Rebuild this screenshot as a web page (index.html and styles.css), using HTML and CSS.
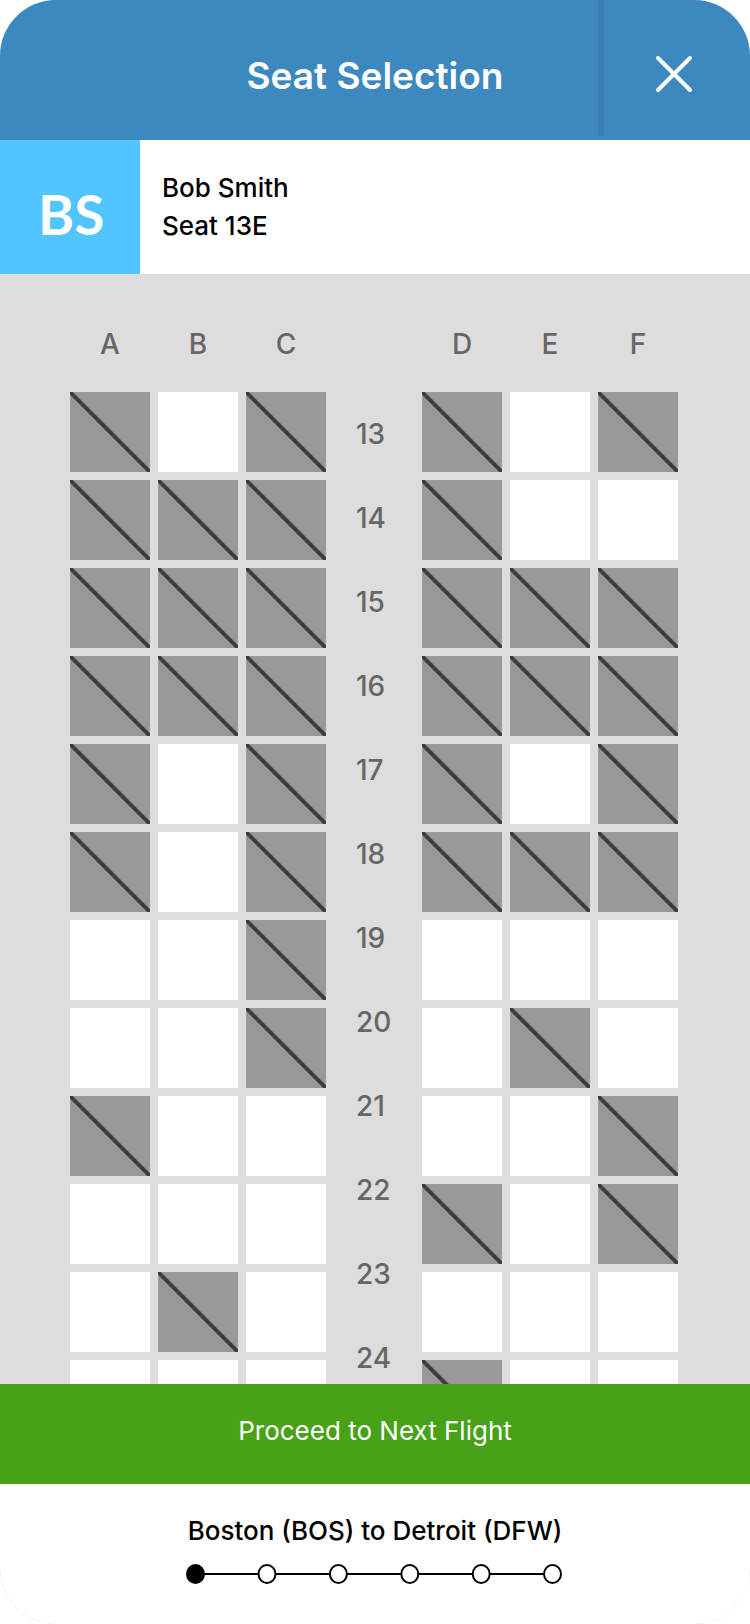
FILE: index.html
```html
<!DOCTYPE html>
<html lang="en">
<head>
<meta charset="utf-8">
<meta name="viewport" content="width=device-width, initial-scale=1">
<title>Seat Selection</title>
<link rel="stylesheet" href="styles.css">
</head>
<body>
<div class="screen">
  <header class="topbar">
    <h1 class="topbar-title">Seat Selection</h1>
    <button class="close" type="button" aria-label="Close">
      <svg width="38" height="38" viewBox="0 0 38 38" fill="none" stroke="currentColor" stroke-width="4" stroke-linecap="round" aria-hidden="true"><path d="M3 3L35 35M35 3L3 35"/></svg>
    </button>
  </header>

  <section class="passenger">
    <div class="avatar">BS</div>
    <div class="passenger-info">
      <div>Bob Smith</div>
      <div>Seat 13E</div>
    </div>
  </section>

  <main class="cabin">
    <div class="map">
      <div class="block" id="left"><span class="letter">A</span><span class="letter">B</span><span class="letter">C</span></div>
      <div class="aisle" id="aisle"></div>
      <div class="block" id="right"><span class="letter">D</span><span class="letter">E</span><span class="letter">F</span></div>
    </div>
  </main>

  <button class="proceed" type="button">Proceed to Next Flight</button>

  <footer class="route">
    <div class="route-name">Boston (BOS) to Detroit (DFW)</div>
    <svg class="steps" width="378" height="20" viewBox="0 0 378 20" fill="#fff" stroke="#000" stroke-width="2" role="img" aria-label="Flight 1 of 6">
      <path d="M10 10H366"/>
      <ellipse cx="9.5" cy="10" rx="8.5" ry="9" fill="#000"/>
      <ellipse cx="81" cy="10" rx="8.5" ry="9"/>
      <ellipse cx="152.400" cy="10" rx="8.5" ry="9"/>
      <ellipse cx="223.800" cy="10" rx="8.5" ry="9"/>
      <ellipse cx="295.200" cy="10" rx="8.5" ry="9"/>
      <ellipse cx="366.500" cy="10" rx="8.5" ry="9"/>
    </svg>
  </footer>
</div>
<script src="seats.js"></script>
</body>
</html>
```
FILE: styles.css
```css
* { box-sizing: border-box; }

body {
  margin: 0;
  background: #fff;
  color: #000;
  font: 400 26px/38px Inter, "Liberation Sans", sans-serif;
}

button {
  margin: 0;
  padding: 0;
  border: 0;
  font: inherit;
}

.screen {
  display: flex;
  flex-direction: column;
  height: 100vh;
  overflow: hidden;
  border-radius: 56px;
  background: #ddd;
}

.topbar {
  display: flex;
  flex: none;
  height: 140px;
  padding-left: 152px;
  background: #3d88bf;
  color: #fff;
}

.topbar-title {
  flex: 1;
  margin: 0;
  padding-top: 12px;
  font-size: 37px;
  font-weight: 600;
  line-height: 128px;
  text-align: center;
  white-space: nowrap;
}

.close {
  display: flex;
  align-items: center;
  justify-content: center;
  width: 152px;
  height: 136px;
  padding: 12px 7px 0 0;
  border-left: 6px solid #397eb9;
  background: none;
  color: #fff;
}

.passenger {
  display: flex;
  flex: none;
  height: 134px;
  background: #fff;
}

.avatar {
  width: 140px;
  padding: 14px 0 0 3px;
  background: #52c4ff;
  color: #fff;
  font: 700 55px/120px Lato, sans-serif;
  text-align: center;
}

.passenger-info {
  align-self: center;
  padding: 0 0 0 22px;
  font-weight: 500;
}

.cabin {
  flex: 1;
  min-height: 0;
  overflow-y: auto;
  scrollbar-width: none;
  color: #666;
  font-size: 28px;
  font-weight: 500;
}

.map {
  display: grid;
  grid-template-columns: 1fr 96px 1fr;
  padding: 50px 72px 0 70px;
}

.block {
  display: grid;
  grid-template-columns: repeat(3, 1fr);
  align-content: start;
  gap: 8px;
}

.letter {
  height: 60px;
  line-height: 40px;
  text-align: center;
}

.aisle {
  padding: 68px 0 0 30px;
  line-height: 84px;
}

.seat {
  aspect-ratio: 1;
  background: #fff;
}

.seat:disabled {
  background: #999;
}

.seat svg {
  display: block;
  width: 100%;
  height: 100%;
}

.proceed {
  flex: none;
  height: 100px;
  padding-bottom: 6px;
  background: #47a217;
  color: #fff;
}

.route {
  display: flex;
  flex: none;
  flex-direction: column;
  align-items: center;
  gap: 14px;
  height: 140px;
  padding-top: 28px;
  border-radius: 0 0 56px 56px;
  background: #fff;
}

.route-name {
  line-height: 38px;
  font-weight: 500;
}

.steps {
  display: block;
}
```
FILE: seats.js
```js
// One string per row, starting at row 13: x = taken, o = free
const FIRST_ROW = 13;
const ROWS = [
  "xoxxox", "xxxxoo", "xxxxxx", "xxxxxx", "xoxxox", "xoxxxx",
  "ooxooo", "ooxoxo", "xoooox", "oooxox", "oxoooo", "oooxoo"
];
const SLASH = '<svg viewBox="0 0 80 80" aria-hidden="true"><path d="M0 0L80 80" stroke="#3d3d3d" stroke-width="4"/></svg>';

ROWS.forEach((row, r) => {
  const number = document.createElement("div");
  number.textContent = FIRST_ROW + r;
  document.getElementById("aisle").append(number);

  [...row].forEach((state, c) => {
    const seat = document.createElement("button");
    seat.type = "button";
    seat.className = "seat";
    seat.setAttribute("aria-label", "Seat " + (FIRST_ROW + r) + "ABCDEF"[c]);
    if (state === "x") {
      seat.disabled = true;
      seat.innerHTML = SLASH;
    }
    document.getElementById(c < 3 ? "left" : "right").append(seat);
  });
});
```
